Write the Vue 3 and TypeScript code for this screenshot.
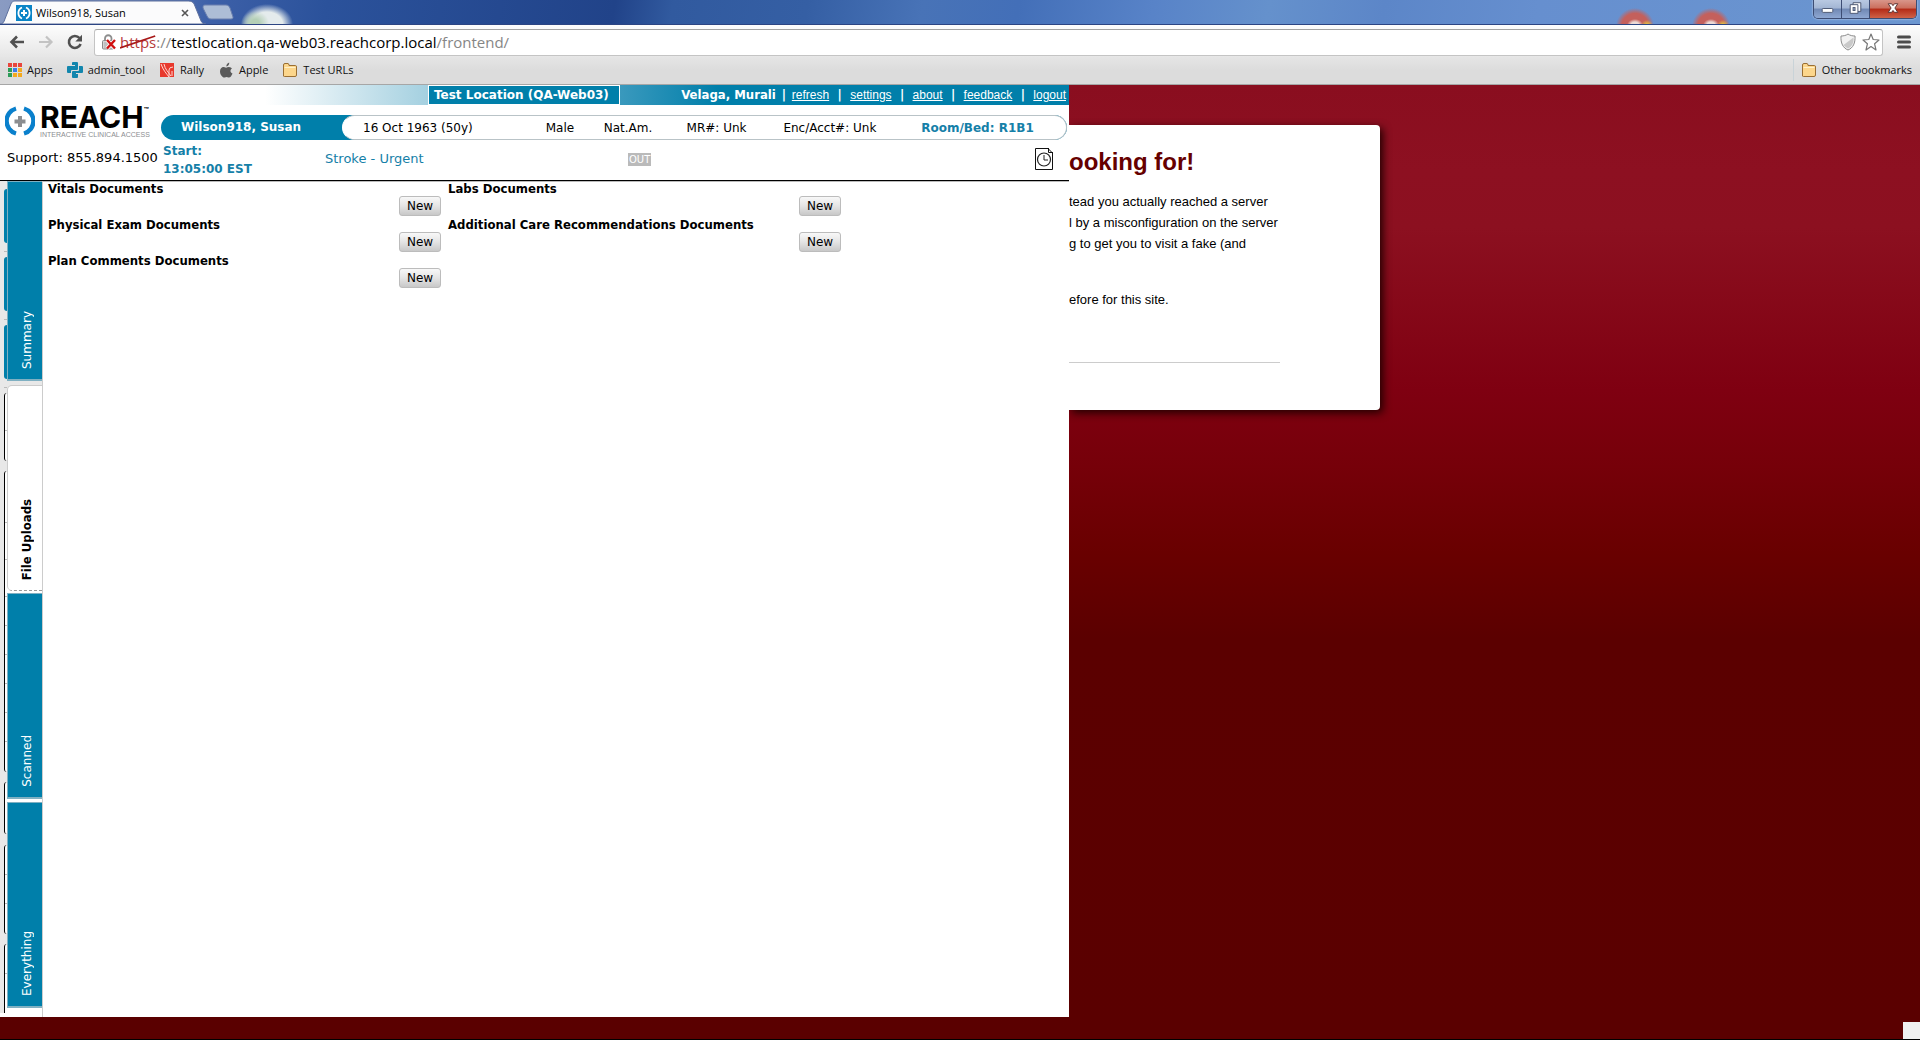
<script setup lang="ts">
interface DocumentGroup {
  title: string
}

interface SideTab {
  label: string
  active: boolean
}

interface Panel {
  kind: 'solid' | 'outline' | 'open' | 'gap' | 'ruled'
  rows: number[]
}

const links: string[] = ['refresh', 'settings', 'about', 'feedback', 'logout']

const patientFacts: string[] = ['16 Oct 1963 (50y)', 'Male', 'Nat.Am.', 'MR#: Unk', 'Enc/Acct#: Unk']

const documents: DocumentGroup[] = [
  { title: 'Vitals Documents' },
  { title: 'Labs Documents' },
  { title: 'Physical Exam Documents' },
  { title: 'Additional Care Recommendations Documents' },
  { title: 'Plan Comments Documents' },
]

const tabs: SideTab[] = [
  { label: 'Summary', active: false },
  { label: 'File Uploads', active: true },
  { label: 'Scanned', active: false },
  { label: 'Everything', active: false },
]

/* Edges of the panels that lie under the drawer, from top to bottom. */
const panels: Panel[] = [
  { kind: 'gap', rows: [8] },
  { kind: 'solid', rows: [54] },
  { kind: 'ruled', rows: [8, 6] },
  { kind: 'solid', rows: [54] },
  { kind: 'ruled', rows: [8, 6] },
  { kind: 'solid', rows: [54] },
  { kind: 'ruled', rows: [8, 6] },
  { kind: 'outline', rows: [37, 31] },
  { kind: 'gap', rows: [10] },
  { kind: 'outline', rows: [51, 37, 37, 29, 29, 29, 29, 29, 31] },
  { kind: 'gap', rows: [10] },
  { kind: 'outline', rows: [52] },
  { kind: 'gap', rows: [11] },
  { kind: 'outline', rows: [29, 29, 31] },
  { kind: 'gap', rows: [10] },
  { kind: 'open', rows: [29, 40] },
]
</script>

<template>
  <div class="window">
    <header class="browser">
      <div class="strip">
        <div class="tab">
          <svg class="tab-shape" viewBox="0 0 210 24" preserveAspectRatio="none" aria-hidden="true">
            <path d="M0 24C3 24 4 22 5 19L11 4C12 2 13 1 15 1H190C193 1 195 2 196 4L203 21C204 23 205 24 208 24Z" fill="#fbfbfc" stroke="#5d6f9c" stroke-width="1" />
          </svg>
          <svg class="favicon" viewBox="0 0 16 16" aria-hidden="true">
            <rect width="16" height="16" fill="#0a84c6" />
            <path d="M6 2.5A6 6 0 0 0 6 13.5M10 2.5A6 6 0 0 1 10 13.5" fill="none" stroke="#fff" stroke-width="1.8" />
            <path d="M8 5V11M5 8H11" stroke="#fff" stroke-width="2" />
          </svg>
          <span class="tab-title">Wilson918, Susan</span>
          <button class="plain tab-close" type="button" aria-label="Close tab">
            <svg viewBox="0 0 8 8"><path d="M1 1L7 7M7 1L1 7" stroke="#555" stroke-width="1.6" /></svg>
          </button>
        </div>
        <button class="plain new-tab" type="button" aria-label="New tab">
          <svg viewBox="0 0 32 16"><path d="M3 1H24C26 1 27 2 28 4L31 13C31 14 31 15 29 15H9C7 15 6 14 5 12L1 4C1 2 1 1 3 1Z" fill="#adbdd6" stroke="#6a7fae" /></svg>
        </button>
        <div class="controls">
          <button class="plain control" type="button" aria-label="Minimize">
            <svg viewBox="0 0 28 18"><rect x="8.500" y="8.500" width="11" height="4" rx="1" fill="#fff" stroke="#4a5570" /></svg>
          </button>
          <button class="plain control" type="button" aria-label="Restore">
            <svg viewBox="0 0 28 18"><path d="M11.500 2.500H19.500V11.500H11.500Z" fill="#fff" stroke="#4a5570" /><path d="M8.500 4.500H16.500V13.500H8.500Z" fill="#fff" stroke="#4a5570" /><rect x="11.500" y="7.500" width="2" height="3" fill="#9fb4d6" stroke="#4a5570" /></svg>
          </button>
          <button class="plain control close" type="button" aria-label="Close">
            <svg viewBox="0 0 48 18"><path d="M19 3.500H22.500L24 5.500L25.500 3.500H29L26 8L29 12.500H25.500L24 10.500L22.500 12.500H19L22 8Z" fill="#fff" stroke="#5c3434" /></svg>
          </button>
        </div>
      </div>

      <div class="toolbar">
        <button class="plain nav" type="button" aria-label="Back">
          <svg viewBox="0 0 16 16"><path d="M15 8H3M8 2.500L2.500 8L8 13.500" fill="none" stroke="#505050" stroke-width="2.600" /></svg>
        </button>
        <button class="plain nav" type="button" aria-label="Forward">
          <svg viewBox="0 0 16 16"><path d="M1 8H13M8 2.500L13.500 8L8 13.500" fill="none" stroke="#c3c3c3" stroke-width="2.200" /></svg>
        </button>
        <button class="plain nav" type="button" aria-label="Reload">
          <svg viewBox="0 0 16 16"><path d="M12.500 4A6 6 0 1 0 13.600 10" fill="none" stroke="#505050" stroke-width="2.600" /><path d="M15 .8V7.500H8.300Z" fill="#505050" /></svg>
        </button>
        <div class="omnibox" role="textbox" aria-label="Address" tabindex="0">
          <svg class="lock" viewBox="0 0 16 16" aria-hidden="true">
            <path d="M4 7V4.500A3.200 3.200 0 0 1 10.500 4.500V7" fill="none" stroke="#8d8d8d" stroke-width="1.800" />
            <rect x="1.500" y="6.500" width="11" height="8.500" rx="1" fill="#d5d5d5" stroke="#8a8a8a" />
            <path d="M3 9H10M3 11H10M3 13H10" stroke="#aaa" />
            <path d="M6 6L14 14.500M14 6L6 14.500" stroke="#fff" stroke-width="4" />
            <path d="M6 6L14 14.500M14 6L6 14.500" stroke="#cf1010" stroke-width="2.400" />
          </svg>
          <span class="url"><span class="scheme">https<svg viewBox="0 0 36 14" preserveAspectRatio="none" aria-hidden="true"><path d="M0 13L35 1" stroke="#a81818" stroke-width="1.800" /></svg></span><span class="faint">://</span>testlocation.qa-web03.reachcorp.local<span class="faint">/frontend/</span></span>
          <svg class="box-icon" viewBox="0 0 18 18" aria-hidden="true">
            <path d="M9 1C11 2.500 13.500 3 16 3C16.500 10 14 15 9 17C4 15 1.500 10 2 3C4.500 3 7 2.500 9 1Z" fill="#f2f2f2" stroke="#8b8b8b" />
            <path d="M14.500 4.500C15 10 13 13.500 9 15.500C7 14.600 5.500 13.500 4.500 12Z" fill="#c9c9c9" />
          </svg>
          <svg class="box-icon" viewBox="0 0 18 18" aria-hidden="true">
            <path d="M9 1L11.200 6.500L17 7L12.600 10.800L14 17L9 13.600L4 17L5.400 10.800L1 7L6.800 6.500Z" fill="#fff" stroke="#777" stroke-width="1.200" stroke-linejoin="round" />
          </svg>
        </div>
        <button class="plain menu" type="button" aria-label="Menu">
          <svg viewBox="0 0 14 14"><path d="M1.500 2H12.500M1.500 7H12.500M1.500 12H12.500" stroke="#4b4b4b" stroke-width="3" stroke-linecap="round" /></svg>
        </button>
      </div>

      <nav class="bookmarks">
        <a href="#">
          <svg class="mark apps" viewBox="0 0 14 14" aria-hidden="true">
            <g fill="#e8453c"><rect width="4" height="4" /><rect x="5" width="4" height="4" /><rect x="10" width="4" height="4" /></g>
            <rect y="5" width="4" height="4" fill="#2d9c58" /><rect x="5" y="5" width="4" height="4" fill="#3b7de8" /><rect x="10" y="5" width="4" height="4" fill="#f3a91e" />
            <rect y="10" width="4" height="4" fill="#2d9c58" /><rect x="5" y="10" width="4" height="4" fill="#f3a91e" /><rect x="10" y="10" width="4" height="4" fill="#f3a91e" />
          </svg>Apps</a>
        <a href="#">
          <svg class="mark" viewBox="0 0 16 16" aria-hidden="true">
            <path d="M5 1Q5 0 6 0H10Q11 0 11 1V7Q11 8 10 8H5Q4 8 4 9V11H1Q0 11 0 10V5Q0 4 1 4H8V3H5Z" fill="#1286ad" />
            <path d="M11 15Q11 16 10 16H6Q5 16 5 15V10Q5 9 6 9H11Q12 9 12 8V4H15Q16 4 16 5V10Q16 11 15 11H9V12H11Z" fill="#1286ad" />
          </svg>admin_tool</a>
        <a href="#">
          <svg class="mark" viewBox="0 0 16 16" aria-hidden="true">
            <rect x="1" y="1" width="14" height="14" fill="#e8392d" />
            <path d="M2 2C4 8 7 11 10 15M5 2C6 7 9 10 12 14M10 15V8Q10 5 14 5M13 14V9" fill="none" stroke="#ffd5cf" />
          </svg>Rally</a>
        <a href="#">
          <svg class="mark" viewBox="0 0 16 16" aria-hidden="true">
            <path d="M11 5Q13 5 14 6.500C11.800 8 12 10.500 14.500 11.500C13.500 14 12 16 10.500 15.500Q8.500 14.600 6.800 15.500C4.500 16 2 12.500 2 9.500C2 6 4.500 4.500 6.500 5.200Q8.200 6 9.300 5.300Q10 5 11 5ZM8.300 4.500Q8.300 1.500 11.200.5Q11.500 3.500 8.300 4.500Z" fill="#5a5a5a" />
          </svg>Apple</a>
        <a href="#">
          <svg class="mark" viewBox="0 0 16 16" aria-hidden="true">
            <path d="M1.500 14V3Q1.500 1.500 3 1.500H6Q7 1.500 7 3.500H13.500Q14.500 3.500 14.500 5V13Q14.500 14.500 13 14.500H2.500Q1.500 14.500 1.500 14Z" fill="#fcd68b" stroke="#9a6f33" />
            <path d="M2.500 5.500H13.500" stroke="#fff0c8" />
          </svg>Test URLs</a>
        <a class="other" href="#">
          <svg class="mark" viewBox="0 0 16 16" aria-hidden="true">
            <path d="M1.500 14V3Q1.500 1.500 3 1.500H6Q7 1.500 7 3.500H13.500Q14.500 3.500 14.500 5V13Q14.500 14.500 13 14.500H2.500Q1.500 14.500 1.500 14Z" fill="#fcd68b" stroke="#9a6f33" />
            <path d="M2.500 5.500H13.500" stroke="#fff0c8" />
          </svg>Other bookmarks</a>
      </nav>
    </header>

    <main class="viewport">
      <section class="app">
        <header class="app-header">
          <div class="bar">
            <strong class="location">Test Location (QA-Web03)</strong>
            <div class="account">
              <strong>Velaga, Murali</strong>
              <template v-for="link in links" :key="link">
                <b class="divider">|</b><a href="#">{{ link }}</a>
              </template>
            </div>
          </div>
          <div class="identity">
            <div class="brand">
              <div class="logo">
                <svg viewBox="0 0 30 30" aria-hidden="true">
                  <path d="M11 2.500A13 13 0 0 0 11 27.500M19 2.500A13 13 0 0 1 19 27.500" fill="none" stroke="#0a80cc" stroke-width="4.400" />
                  <path d="M15 10V21M9.500 15.500H20.500" stroke="#8b8d90" stroke-width="4" />
                </svg>
                <div class="wordmark">
                  <div class="word">REACH<span class="tm">™</span></div>
                  <div class="tagline">INTERACTIVE CLINICAL ACCESS</div>
                </div>
              </div>
              <div class="support">Support: 855.894.1500</div>
            </div>
            <div class="patient">
              <div class="pill">
                <strong class="name">Wilson918, Susan</strong>
                <div class="facts">
                  <span v-for="fact in patientFacts" :key="fact">{{ fact }}</span>
                  <strong>Room/Bed: R1B1</strong>
                </div>
              </div>
              <div class="visit">
                <strong class="start">Start:<br>13:05:00 EST</strong>
                <span class="reason">Stroke - Urgent</span>
                <span><span class="out">OUT</span></span>
                <button class="plain history" type="button" aria-label="History">
                  <svg viewBox="0 0 18 22"><path d="M.500 .500H13L17.500 5V21.500H.500Z" fill="#fff" stroke="#111" /><path d="M13.500 0V4.500H18" fill="none" stroke="#111" /><circle cx="9" cy="11.500" r="6.500" fill="#fff" stroke="#222" stroke-width="1.200" /><path d="M9 7V12H13" fill="none" stroke="#222" /></svg>
                </button>
              </div>
            </div>
          </div>
        </header>

        <div class="workspace">
          <div class="underlay" aria-hidden="true">
            <div v-for="(panel, index) in panels" :key="index" class="panel" :class="panel.kind">
              <i v-for="(row, n) in panel.rows" :key="n" :style="{ height: row + 'px' }"></i>
            </div>
          </div>
          <nav class="side-tabs">
            <button v-for="tab in tabs" :key="tab.label" class="side-tab" :class="{ active: tab.active }" type="button">
              <span>{{ tab.label }}</span>
            </button>
          </nav>
          <div class="documents">
            <div v-for="group in documents" :key="group.title" class="group">
              <strong>{{ group.title }}</strong>
              <button type="button">New</button>
            </div>
          </div>
        </div>
      </section>

      <article class="warning">
        <h1>ooking for!</h1>
        <p>tead you actually reached a server<br>l by a misconfiguration on the server<br>g to get you to visit a fake (and</p>
        <p class="last">efore for this site.</p>
        <hr>
      </article>

      <div class="corner"></div>
    </main>
  </div>
</template>

<style>
body {
  margin: 0;
}
</style>

<style scoped>
* {
  box-sizing: border-box;
}

svg {
  display: block;
}

.window {
  display: flex;
  flex-direction: column;
  min-height: 100vh;
  font: 12px/14px "DejaVu Sans", Verdana, sans-serif;
  color: #000;
}

.plain {
  padding: 0;
  border: 0;
  background: none;
}

/* Browser frame */
.browser {
  font: 11px/14px "Open Sans", "Segoe UI", sans-serif;
  border-bottom: 1px solid #a6a6a6;
}

.strip {
  display: flex;
  height: 25px;
  border-bottom: 1px solid #2c4583;
  background:
    radial-gradient(ellipse 14px 12px at 255px 23px, #b4cfb6 30%, #b4cfb600),
    radial-gradient(ellipse 26px 20px at 267px 24px, #e4ebec 60%, #e4ebec00),
    radial-gradient(ellipse 8px 6px at 1635px 25px, #ecd9d4 50%, #ecd9d400),
    radial-gradient(ellipse 6px 5px at 1647px 25px, #dcb347 30%, #dcb34700),
    radial-gradient(ellipse 19px 18px at 1635px 26px, #c4605c 70%, #c4605c00),
    radial-gradient(ellipse 8px 6px at 1711px 25px, #ecd9d4 50%, #ecd9d400),
    radial-gradient(ellipse 6px 5px at 1723px 25px, #dcb347 30%, #dcb34700),
    radial-gradient(ellipse 19px 18px at 1711px 26px, #c4605c 70%, #c4605c00),
    linear-gradient(100deg, #8a9bc2 0, #7289ba 6%, #3d60a8 11%, #2b529b 17%, #214389 32%, #315a9f 35%, #355fa4 42%, #4873b7 48%, #436fb8 53%, #5883c8 60%, #6591cc 66%, #5c86c8 72%, #668fcf 80%, #6b96d0 100%);
}

.tab {
  position: relative;
  display: flex;
  align-items: center;
  width: 208px;
  padding: 2px 19px 0 16px;
}

.tab > * {
  position: relative;
}

.tab > .tab-shape {
  position: absolute;
  inset: 0;
  width: 100%;
  height: 100%;
}

.favicon {
  width: 16px;
  height: 16px;
}

.tab-title {
  flex: 1;
  margin-left: 4px;
}

.tab-close,
.tab-close svg {
  width: 8px;
  height: 8px;
}

.new-tab {
  align-self: center;
  margin-left: -6px;
}

.new-tab svg {
  width: 32px;
  height: 16px;
}

.controls {
  display: flex;
  height: 19px;
  margin: 0 3px 0 auto;
  border: 1px solid #3d4d74;
  border-top: 0;
  border-radius: 0 0 5px 5px;
  overflow: hidden;
  box-shadow: 0 0 2px #dfe8f8;
}

.control {
  background: linear-gradient(#b9c9e2, #a3b6d4 45%, #7088b4 50%, #8fa8d2);
}

.control + .control {
  border-left: 1px solid #3d4d74;
}

.control svg {
  width: 27px;
  height: 18px;
}

.control.close {
  background: linear-gradient(#d9968a, #cb6e5d 45%, #b42a16 50%, #cf6248);
}

.control.close svg {
  width: 46px;
}

.toolbar {
  display: flex;
  align-items: center;
  height: 32px;
  padding: 3px 9px 1px;
  background: linear-gradient(#fdfdfd, #e6e6e6);
}

.nav {
  width: 16px;
  height: 16px;
  margin-right: 13px;
}

.nav svg {
  width: 16px;
  height: 16px;
}

.omnibox {
  display: flex;
  flex: 1;
  align-items: center;
  height: 27px;
  margin-left: -2px;
  padding: 0 2px 0 6px;
  border: 1px solid #c4c4c4;
  border-top-color: #a3a3a3;
  border-radius: 3px;
  background: #fff;
}

.lock {
  width: 16px;
  height: 16px;
}

.url {
  flex: 1;
  margin-left: 3px;
  font-size: 15px;
  line-height: 20px;
}

.scheme {
  position: relative;
  color: #b53a3a;
}

.scheme svg {
  position: absolute;
  inset: 3px 0 0;
  width: 100%;
  height: 14px;
}

.faint {
  color: #868686;
}

.box-icon {
  width: 18px;
  height: 18px;
  margin-left: 5px;
}

.menu {
  margin-left: 14px;
}

.menu svg {
  width: 14px;
  height: 14px;
}

.bookmarks {
  display: flex;
  align-items: center;
  height: 27px;
  padding: 0 8px 2px;
  background: linear-gradient(#e5e5e5, #dcdcdc 50%);
}

.bookmarks a {
  display: flex;
  align-items: center;
  gap: 5px;
  margin-right: 14px;
  color: #111;
  text-decoration: none;
}

.mark {
  width: 16px;
  height: 16px;
}

.mark.apps {
  width: 14px;
  height: 14px;
}

.bookmarks .other {
  height: 22px;
  margin: 0 0 0 auto;
  padding-left: 7px;
  border-left: 1px solid #c9d3d8;
}

/* Page */
.viewport {
  display: grid;
  grid-template-columns: 1069fr 311fr 540fr;
  flex: 1;
  border-bottom: 1px solid #000;
  background: linear-gradient(#8a0e1f, #8d1021 9%, #8c1020 15%, #7f0011 32%, #760009 40%, #690000 49%, #5b0000 58%, #5a0000);
}

.app {
  z-index: 1;
  display: flex;
  flex-direction: column;
  margin-bottom: 22px;
  background: #fff;
}

.app-header {
  border-bottom: 1px solid #000;
}

.bar {
  display: flex;
  align-items: center;
  justify-content: space-between;
  height: 20px;
  padding: 0 3px 0 428px;
  color: #fff;
  background: linear-gradient(90deg, #fff 265px, #a4d0e0 428px, #3a99bd 620px, #007faa 718px);
}

strong,
.divider {
  font: bold 13px/14px "DejaVu Sans Condensed", Tahoma, sans-serif;
}

.location,
.name,
.start,
.facts strong {
  font: bold 12px/14px "DejaVu Sans", Verdana, sans-serif;
}

.location {
  width: 192px;
  padding: 2px 5px;
  border: 1px solid #fff;
  background: #007faa;
  white-space: nowrap;
}

.account {
  display: flex;
  align-items: center;
}

.divider {
  width: 21px;
  text-align: center;
}

.account strong + .divider {
  width: 16px;
}

.account a {
  font: 12px/14px "Liberation Sans", Arial, sans-serif;
  color: #fff;
}

.identity {
  display: flex;
  height: 75px;
}

.brand {
  flex: 0 0 161px;
}

.logo {
  display: flex;
  gap: 5px;
  height: 33px;
  padding: 1px 0 0 5px;
}

.logo > svg {
  width: 30px;
  height: 30px;
}

.word {
  display: flex;
  font: bold 30px/23px Inter, sans-serif;
}

.tm {
  font: bold 8px/8px Inter, sans-serif;
}

.tagline {
  padding-top: 2px;
  font: 7px/8px "Liberation Sans", Arial, sans-serif;
  color: #8b8d90;
  white-space: nowrap;
}

.support {
  padding: 13px 0 0 7px;
  font-size: 13px;
  white-space: nowrap;
}

.patient {
  flex: 1;
  padding-top: 10px;
}

.pill {
  display: flex;
  height: 25px;
  margin-right: 2px;
  border-radius: 13px;
  background: #007faa;
}

.name {
  width: 181px;
  padding-left: 20px;
  line-height: 25px;
  color: #fff;
}

.facts {
  display: grid;
  flex: 1;
  grid-template-columns: 183fr 58fr 83fr 97fr 138fr 145fr;
  align-items: center;
  padding-left: 20px;
  border: 1px solid #b9c3c7;
  border-left-color: #fff;
  border-radius: 13px;
  background: #fff;
  white-space: nowrap;
}

.facts strong,
.start,
.reason {
  color: #1580a8;
}

.visit {
  display: grid;
  grid-template-columns: 162fr 303fr 407fr 34fr;
  align-items: center;
  height: 38px;
  padding-left: 2px;
}

.start {
  padding-top: 2px;
  line-height: 18px;
}

.reason {
  font-size: 13px;
}

.out {
  display: inline-block;
  padding: 0 1px;
  font: 10px/13px "DejaVu Sans", Verdana, sans-serif;
  color: #fff;
  background: #bababa;
}

.history svg {
  width: 18px;
  height: 22px;
}

.workspace {
  display: flex;
  flex: 1;
}

/* Panel edges left of the drawer */
.underlay {
  width: 7px;
  padding-left: 4px;
  background: linear-gradient(#e8e8e8, #e8e8e8) no-repeat 0 0 / 100% 832px;
}

.panel i {
  display: block;
}

.panel.solid {
  border-radius: 3px 0 0 3px;
  background: #007faa;
}

.panel.outline,
.panel.open {
  overflow: hidden;
  border-left: 1px solid #000;
  border-radius: 5px 0 0 5px;
  background: #fff;
}

.panel.open {
  border-radius: 5px 0 0;
}

.panel i + i {
  border-top: 1px solid #bbb;
}

.side-tabs {
  display: flex;
  flex-direction: column;
  width: 36px;
  border-right: 1px solid #ccc;
  background: linear-gradient(#e8e8e8, #e8e8e8) no-repeat 0 0 / 100% 210px;
}

.side-tab {
  display: flex;
  align-items: center;
  justify-content: flex-start;
  flex-direction: column-reverse;
  height: 206px;
  margin-bottom: 3px;
  padding: 0 0 10px 3px;
  border: 1px solid #7fb0c2;
  border-width: 1px 0 2px 1px;
  font: 12px/14px "DejaVu Sans", Verdana, sans-serif;
  color: #fff;
  background: #007faa;
}

.side-tab:first-child {
  height: 200px;
  margin-bottom: 4px;
}

.side-tab.active {
  margin-bottom: 2px;
  border: 1px solid #ccc;
  border-width: 1px 0 1px 1px;
  border-bottom: 1px dashed #999;
  border-radius: 5px 0 0 5px;
  font: bold 13px/14px "DejaVu Sans Condensed", Tahoma, sans-serif;
  color: #000;
  background: #fff;
}

.side-tab span {
  writing-mode: vertical-rl;
  transform: rotate(180deg);
}

.documents {
  display: grid;
  flex: 1;
  grid-template-columns: 400px 400px;
  align-content: start;
  padding-left: 5px;
  border-top: 1px solid #bbb;
}

.group {
  display: flex;
  flex-direction: column;
  padding: 0 7px 2px 0;
}

.group button {
  align-self: flex-end;
  width: 42px;
  height: 20px;
  padding: 0;
  border: 1px solid #bcbcbc;
  border-radius: 3px;
  font: 12px/14px "DejaVu Sans", Verdana, sans-serif;
  color: #000;
  background: linear-gradient(#f8f8f8, #e4e4e4 50%, #c8c8c8);
}

/* Certificate notice */
.warning {
  align-self: start;
  height: 285px;
  margin-top: 40px;
  padding: 23px 100px 0 0;
  border-radius: 0 4px 4px 0;
  background: #fff;
  box-shadow: 3px 3px 8px #200;
  font: 13px/21px "Liberation Sans", Arial, sans-serif;
  white-space: nowrap;
}

.warning h1 {
  margin: 0 0 15px;
  font-size: 24px;
  line-height: 28px;
  color: #600;
}

.warning p {
  margin: 0 0 35px;
}

.warning .last {
  margin-bottom: 52px;
}

.warning hr {
  margin: 0;
  border: 0;
  border-top: 1px solid #ccc;
}

.corner {
  place-self: end;
  width: 17px;
  height: 17px;
  background: #f0f0f0;
}
</style>
